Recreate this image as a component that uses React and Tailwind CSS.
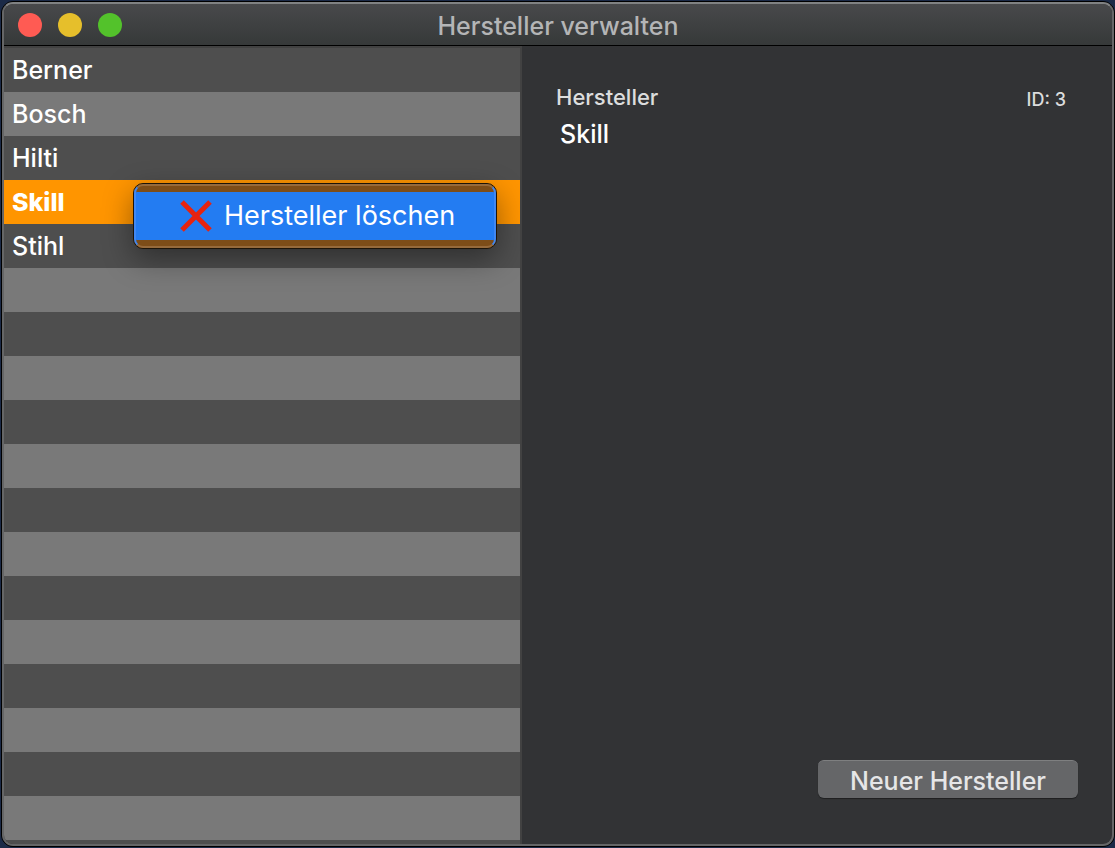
import { useState } from 'react'
import clsx from 'clsx'

const manufacturers = [
    { id: 0, name: 'Berner' },
    { id: 1, name: 'Bosch' },
    { id: 2, name: 'Hilti' },
    { id: 3, name: 'Skill' },
    { id: 4, name: 'Stihl' },
]

function TitleBar() {
    return (
        <header className="h-[42px] shrink-0 grid grid-cols-[1fr_auto_1fr] items-center px-3.5 bg-linear-to-b from-[#48494b] to-[#363939] border-b border-black">
            <div className="flex gap-4">
                <button aria-label="Schließen" className="size-6 rounded-full bg-[#ff5b53]"></button>
                <button aria-label="Minimieren" className="size-6 rounded-full bg-[#e6bf2b]"></button>
                <button aria-label="Vergrößern" className="size-6 rounded-full bg-[#53c22b]"></button>
            </div>
            <h1 className="pt-0.5 text-[25px] leading-8 font-medium text-[#b4b5b6]">Hersteller verwalten</h1>
        </header>
    )
}

function ContextMenu() {
    return (
        <div className="absolute left-[129px] top-[3px] z-10 w-[364px] rounded-[10px] border border-[#1c1408] bg-[#7d4d18] shadow-[0_10px_30px_rgba(0,0,0,0.4)]">
            <div className="rounded-[9px] overflow-hidden border-2 border-[#966a3b] border-x-[#4088f3] py-1.5">
                <button className="w-full h-12 flex items-center gap-3 pl-11 bg-[#237cf2] text-[27px] text-white">
                    <svg className="size-8" viewBox="0 0 32 32" stroke="#e7230f" strokeWidth="5" aria-hidden="true">
                        <path d="M2 2L30 30M30 2L2 30" />
                    </svg>
                    Hersteller löschen
                </button>
            </div>
        </div>
    )
}

function ManufacturerList({ selected, onSelect }) {
    return (
        <nav className="w-[518px] shrink-0 overflow-hidden flex flex-col border-t-2 border-r-2 border-[#424242]">
            <ul className="flex-1 bg-[repeating-linear-gradient(#4e4e4e_0_44px,#797979_44px_88px)]">
                {manufacturers.map((m) => (
                    <li key={m.id} className={clsx('relative h-11', m.id === selected && 'bg-[#ff9500]')}>
                        <button
                            onClick={() => onSelect(m.id)}
                            className={clsx(
                                'w-full h-full px-2 pt-0.5 text-left text-[25px] text-white',
                                m.id === selected ? 'font-extrabold' : 'font-medium'
                            )}
                        >
                            {m.name}
                        </button>
                        {m.id === selected && <ContextMenu />}
                    </li>
                ))}
            </ul>
        </nav>
    )
}

export default function App() {
    const [selected, setSelected] = useState(3)
    const current = manufacturers.find((m) => m.id === selected)

    return (
        <div className="h-screen p-px pr-0 bg-[#1b2a47] font-['Inter',sans-serif]">
            <div className="h-full rounded-[12px] border border-black bg-black">
                <div className="h-full flex flex-col overflow-hidden rounded-[11px] border-2 border-[#656667] border-t-[#808283] bg-[#323335]">
                    <TitleBar />
                    <div className="flex-1 min-h-0 flex">
                        <ManufacturerList selected={selected} onSelect={setSelected} />
                        <main className="flex-1 min-w-0 flex flex-col justify-between pt-9 pb-[46px] pl-[34px] pr-[34px]">
                            <div>
                                <div className="flex items-center justify-between pr-3">
                                    <label htmlFor="name" className="text-[22px] leading-7 font-medium text-[#dcdddd]">Hersteller</label>
                                    <span className="pt-1.5 text-[18px] leading-6 font-medium text-[#dcdddd]">ID: {current.id}</span>
                                </div>
                                <input
                                    id="name"
                                    className="mt-0.5 px-1 h-10 w-full bg-transparent text-[25px] font-medium text-white outline-none"
                                    value={current.name}
                                    readOnly
                                />
                            </div>
                            <button className="self-end w-[260px] h-[38px] pt-0.5 rounded-md bg-[#656668] border-t border-[#7e7f80] text-[25px] leading-8 font-medium text-[#e6e6e7] shadow-[0_1px_1px_rgba(0,0,0,0.4)]">
                                Neuer Hersteller
                            </button>
                        </main>
                    </div>
                </div>
            </div>
        </div>
    )
}
